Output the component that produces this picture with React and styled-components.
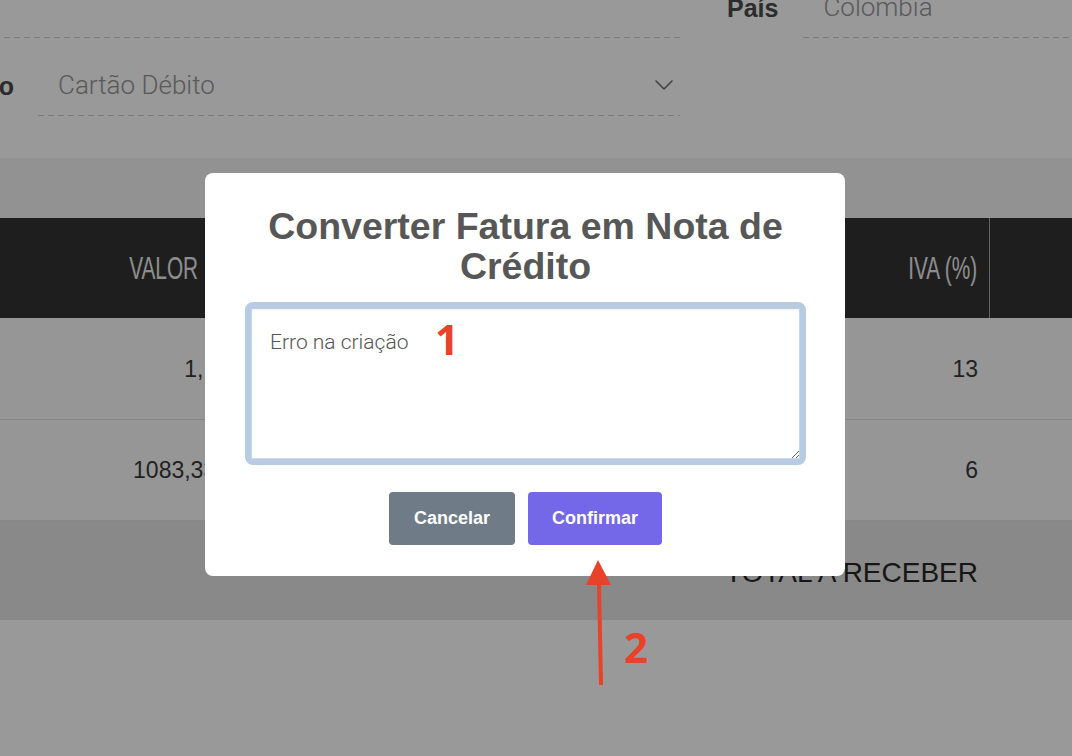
import React from "react";
import styled, { createGlobalStyle } from "styled-components";
import { ChevronDown } from "lucide-react";

const GlobalStyle = createGlobalStyle`
  html, body { margin: 0; padding: 0; background: #ffffff; }
  body { font-family: "Liberation Sans", Arial, sans-serif; }
  * { box-sizing: border-box; }
`;

const Viewport = styled.div`
  position: relative;
  width: 1072px;
  height: 756px;
  overflow: hidden;
  background: #ffffff;
`;

const Page = styled.div`
  width: 1300px;
  margin-left: -200px;
  margin-top: -18px;
`;

const Panel = styled.section`
  background: #ffffff;
  padding: 0 0 42px;
  display: flex;
  flex-direction: column;
  gap: 22px;
  box-shadow: 0 2px 6px rgba(0, 0, 0, 0.08);
`;

const FormRow = styled.div`
  display: flex;
  gap: 47px;
`;

const FieldGroup = styled.div`
  display: grid;
  grid-template-columns: ${(p) => (p.$labelWidth ? `${p.$labelWidth}px 1fr` : "auto 1fr")};
  column-gap: ${(p) => p.$gap || 24}px;
  align-items: center;
  width: ${(p) => (p.$width ? `${p.$width}px` : "auto")};
  flex: ${(p) => (p.$width ? "none" : "1")};
`;

const Label = styled.label`
  display: flex;
  justify-content: flex-end;
  min-width: 0;
  font-family: "Liberation Sans", Arial, sans-serif;
  font-weight: 700;
  font-size: 25px;
  color: #4a4a4a;
  white-space: nowrap;
  padding-bottom: 4px;
`;

const Field = styled.div`
  height: 56px;
  display: flex;
  align-items: center;
  justify-content: space-between;
  padding: 0 0 7px 20px;
  background-image: linear-gradient(to right, #cdcdcd 6px, transparent 6px);
  background-size: 10px 1px;
  background-repeat: repeat-x;
  background-position: left bottom;
  font-family: Roboto, "Liberation Sans", sans-serif;
  font-weight: 300;
  font-size: 26px;
  color: #959595;
  white-space: nowrap;
`;

const Chevron = styled(ChevronDown)`
  color: #6e6e6e;
  flex: none;
`;

const TableSection = styled.section`
  background: #f3f3f3;
  padding-top: 60px;
`;

const Table = styled.table`
  width: 1300px;
  border-collapse: collapse;
  table-layout: fixed;
`;

const HeadCell = styled.th`
  height: 100px;
  background: #323232;
  padding: 0 ${(p) => p.$pad ?? 11}px 0 0;
  text-align: right;
  border-left: ${(p) => (p.$divider ? "1px solid #a8a8a8" : "none")};
`;

const HeadText = styled.span`
  display: inline-block;
  font-family: "Liberation Sans", Arial, sans-serif;
  font-weight: 400;
  font-size: 32px;
  color: #ececec;
  transform: scaleX(0.65);
  transform-origin: right center;
  white-space: nowrap;
`;

const BodyRow = styled.tr`
  background: ${(p) => (p.$total ? "#e4e4e4" : "#fbfbfb")};
  border-bottom: ${(p) => (p.$total ? "none" : "1px solid #e2e2e2")};
`;

const Cell = styled.td`
  height: ${(p) => (p.$total ? 100 : 101)}px;
  font-family: "Liberation Sans", Arial, sans-serif;
  font-size: ${(p) => (p.$total ? 28 : 23)}px;
  font-weight: 400;
  color: ${(p) => (p.$total ? "#262626" : "#383838")};
  text-align: right;
  padding: ${(p) => (p.$total ? "6px" : "2px")} ${(p) => p.$pad ?? 11}px 0 0;
  white-space: nowrap;
`;

const Overlay = styled.div`
  position: absolute;
  inset: 0;
  z-index: 10;
  background: rgba(0, 0, 0, 0.4);
  display: flex;
  justify-content: center;
  align-items: flex-start;
  padding: 173px 22px 0 0;
`;

const Modal = styled.div`
  width: 640px;
  background: #ffffff;
  border-radius: 8px;
  padding: 33px 39px 31px 40px;
  display: flex;
  flex-direction: column;
  align-items: stretch;
`;

const Title = styled.h2`
  margin: 0 0 16px;
  font-family: "Liberation Sans", Arial, sans-serif;
  font-weight: 700;
  font-size: 37.5px;
  line-height: 40px;
  color: #575757;
  text-align: center;
`;

const TextArea = styled.textarea`
  display: block;
  width: 100%;
  height: 163px;
  margin: 0;
  padding: 21px 18px 18px 19px;
  border: 6px solid #b8cbe3;
  border-radius: 8px;
  box-shadow: inset 0 3px 3px -1px rgba(0, 0, 0, 0.06), inset 0 0 0 1px #c9d7ea;
  outline: none;
  resize: vertical;
  font-family: Roboto, "Liberation Sans", sans-serif;
  font-weight: 300;
  font-size: 21px;
  line-height: 26px;
  color: #555555;
`;

const Actions = styled.div`
  display: flex;
  justify-content: center;
  gap: 13px;
  margin-top: 27px;
`;

const Button = styled.button`
  height: 53px;
  padding: 0 ${(p) => (p.$primary ? 24 : 25)}px;
  border: none;
  border-radius: 4px;
  background: ${(p) => (p.$primary ? "#7468e8" : "#6f7c87")};
  color: #ffffff;
  font-family: "Liberation Sans", Arial, sans-serif;
  font-weight: 700;
  font-size: 18px;
  cursor: pointer;
`;

const Marker = styled.span`
  position: absolute;
  z-index: 20;
  left: ${(p) => p.$x}px;
  top: ${(p) => p.$y}px;
  font-family: "Noto Sans", "Open Sans", sans-serif;
  font-weight: 700;
  font-size: 42px;
  line-height: 42px;
  color: #e8422a;
  pointer-events: none;
`;

const ArrowSvg = styled.svg`
  position: absolute;
  z-index: 20;
  left: 0;
  top: 0;
  pointer-events: none;
`;

export default function App() {
  return (
    <>
      <GlobalStyle />
      <Viewport>
        <Page>
          <Panel>
            <FormRow>
              <FieldGroup $labelWidth={150} $width={880}>
                <Label><span>Cliente</span></Label>
                <Field>&nbsp;</Field>
              </FieldGroup>
              <FieldGroup $gap={25}>
                <Label><span>País</span></Label>
                <Field>Colombia</Field>
              </FieldGroup>
            </FormRow>
            <FormRow>
              <FieldGroup $labelWidth={214} $width={880}>
                <Label><span>Método de Pagamento</span></Label>
                <Field>
                  Cartão Débito
                  <Chevron size={32} strokeWidth={1.2} />
                </Field>
              </FieldGroup>
            </FormRow>
          </Panel>
          <TableSection>
            <Table>
              <colgroup>
                <col style={{ width: 440 }} />
                <col style={{ width: 320 }} />
                <col style={{ width: 290 }} />
                <col style={{ width: 139 }} />
                <col style={{ width: 111 }} />
              </colgroup>
              <thead>
                <tr>
                  <HeadCell $pad={42}><HeadText>VALOR</HeadText></HeadCell>
                  <HeadCell><HeadText>DESCONTO</HeadText></HeadCell>
                  <HeadCell><HeadText>TOTAL</HeadText></HeadCell>
                  <HeadCell><HeadText>IVA (%)</HeadText></HeadCell>
                  <HeadCell $divider></HeadCell>
                </tr>
              </thead>
              <tbody>
                <BodyRow>
                  <Cell $pad={11}>1,13</Cell>
                  <Cell>0,00</Cell>
                  <Cell>1,28</Cell>
                  <Cell>13</Cell>
                  <Cell></Cell>
                </BodyRow>
                <BodyRow>
                  <Cell $pad={11}>1083,333</Cell>
                  <Cell>0,00</Cell>
                  <Cell>1148,33</Cell>
                  <Cell>6</Cell>
                  <Cell></Cell>
                </BodyRow>
                <BodyRow $total>
                  <Cell $total colSpan={4}>TOTAL A RECEBER</Cell>
                  <Cell $total></Cell>
                </BodyRow>
              </tbody>
            </Table>
          </TableSection>
        </Page>
        <Overlay>
          <Modal>
            <Title>Converter Fatura em Nota de Crédito</Title>
            <TextArea defaultValue="Erro na criação" />
            <Actions>
              <Button>Cancelar</Button>
              <Button $primary>Confirmar</Button>
            </Actions>
          </Modal>
        </Overlay>
        <Marker $x={435} $y={318}>1</Marker>
        <Marker $x={624} $y={626}>2</Marker>
        <ArrowSvg width="1072" height="756" viewBox="0 0 1072 756">
          <polygon points="598,560 586,585 611,585" fill="#e8422a" />
          <line x1="599" y1="584" x2="601" y2="685" stroke="#e8422a" strokeWidth="4" />
        </ArrowSvg>
      </Viewport>
    </>
  );
}
